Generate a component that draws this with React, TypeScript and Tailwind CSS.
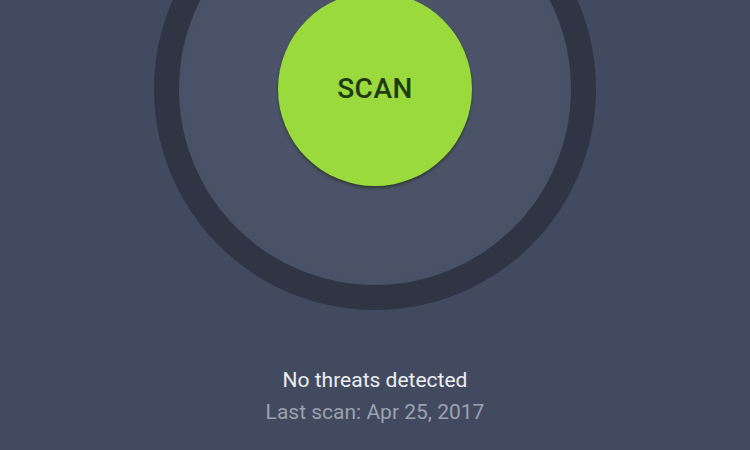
export default function App() {
  return (
    <div
      className="w-[750px] h-[450px] overflow-hidden bg-[#414a5e] flex flex-col items-center"
      style={{ fontFamily: "Roboto, 'Noto Sans', sans-serif" }}
    >
      <div className="mt-[-132px] w-[442px] h-[442px] shrink-0 rounded-full bg-[#2f3545] p-[25px]">
        <div className="w-full h-full rounded-full bg-[radial-gradient(circle,#4d556b_0%,#4a5267_60%,#464e62_100%)] flex items-center justify-center">
          <div className="w-[194px] h-[194px] rounded-full bg-[#9ada3c] shadow-[0_2px_3px_rgba(20,40,10,0.55)] flex items-center justify-center">
            <span className="text-[28px] leading-none font-medium text-[#1f3a14] tracking-[0.5px]">SCAN</span>
          </div>
        </div>
      </div>
      <div className="mt-[57px] text-[21px] leading-[26px] text-[#eceef2]">No threats detected</div>
      <div className="mt-[6px] text-[21px] leading-[26px] text-[#9ca2b0]">Last scan: Apr 25, 2017</div>
    </div>
  );
}
